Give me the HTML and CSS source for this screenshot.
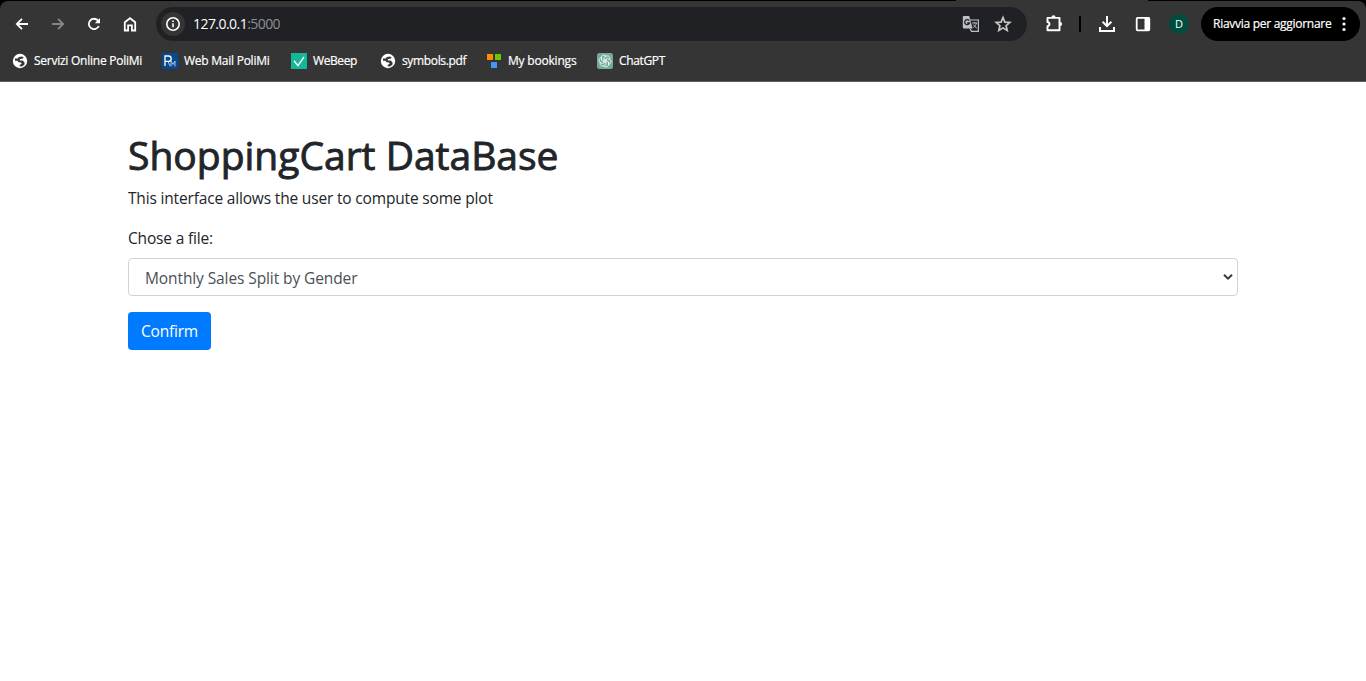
FILE: index.html
```html
<!DOCTYPE html>
<html lang="en">
<head>
<meta charset="utf-8">
<title>ShoppingCart DataBase</title>
<link rel="stylesheet" href="styles.css">
</head>
<body>
<svg class="defs" width="0" height="0"><defs>
<symbol id="globe" viewBox="0 0 16 16"><circle cx="8" cy="8" r="7.200" fill="#fff"/><path d="M3 5.600h2.600L7 4l3-.6 1.800 1.400-1.600 1-2.200.3-.4 1.300 3 .2 2 1.900-.2 2.300-2.600 1.700-2.200-.2.300-1.500 1.700-.8-.5-1.500-2.300-.3-1.600-1.400H3z" fill="#353535"/></symbol>
</defs></svg>
<header class="browser">
  <div class="tabstrip"><i></i></div>
  <div class="chrome">
  <div class="toolbar">
    <nav class="nav">
      <svg width="16" height="16" viewBox="0 0 16 16"><path d="M14 8H3M8 2.800L2.800 8 8 13.200" class="line"/></svg>
      <svg class="dim" width="16" height="16" viewBox="0 0 16 16"><path d="M2 8h11M8 2.800L13.200 8 8 13.200" class="line"/></svg>
      <svg width="16" height="16" viewBox="0 0 16 16"><path d="M12.800 10A5.200 5.200 0 1 1 12 4.600L13 6" class="line"/><path d="M14 2v5.200H8.800z" fill="#fff"/></svg>
      <svg width="16" height="16" viewBox="0 0 16 16"><path d="M2.800 6.200L8 2.200l5.200 4v8.300H9.900V9.400H6.100v5.100H2.800z" class="line"/></svg>
    </nav>
    <div class="address">
      <span class="info"><svg width="16" height="16" viewBox="0 0 16 16"><circle cx="8" cy="8" r="6.200" class="thin"/><path d="M8 7.200v4M8 4.500v1.500" class="thin"/></svg></span>
      <span class="url">127.0.0.1<span class="port">:5000</span></span>
      <svg class="translate" width="18" height="18" viewBox="0 0 18 18"><path d="M8 5h8.400v11.400H9.500L8 13.500" fill="none" stroke="#bdc1c6" stroke-width="1.200"/><path d="M1.800 1h5.400l3.400 12.500H1.800a1 1 0 0 1-1-1V2a1 1 0 0 1 1-1z" fill="#bdc1c6"/><path d="M7.200 5.600A2.500 2.500 0 1 0 7.500 8H5.200" fill="none" stroke="#202124" stroke-width="1.300"/><path d="M10.200 8h5M12.600 7v1M14.400 8c-.5 2-1.500 3.400-3.100 4.600M11.300 9.500c1 1.600 2 2.700 3.500 3.600" fill="none" stroke="#bdc1c6"/></svg>
      <svg class="star" width="18" height="18" viewBox="0 0 18 18"><path d="M9 2.500l1.900 4.600 4.900.4-3.700 3.200 1.100 4.800L9 12.900l-4.200 2.600 1.100-4.800-3.700-3.200 4.900-.4z" fill="none" stroke="#c7c7c7" stroke-width="1.700"/></svg>
    </div>
    <div class="actions">
      <svg width="20" height="20" viewBox="0 0 20 20"><path d="M3.500 3.900H15.500V16.300H3.500v-4.100c2.600-.4 2.600-3.800 0-4.200z" fill="none" stroke="#fff" stroke-width="1.900" stroke-linejoin="round"/><path d="M7.400 3.400a2.100 2.100 0 0 1 4.200 0zM16 8a2.100 2.100 0 0 1 0 4.200z" fill="#fff"/></svg>
      <i class="divider"></i>
      <svg class="download" width="18" height="18" viewBox="0 0 18 18"><path d="M9 1v10M4.600 6.800L9 11.200l4.400-4.400M2 12v4h14v-4" fill="none" stroke="#fff" stroke-width="2"/></svg>
      <svg class="panel" width="16" height="16" viewBox="0 0 16 16"><rect x="1.700" y="1.900" width="12.600" height="12.400" rx="1" fill="none" stroke="#fff" stroke-width="1.800"/><path d="M9.500 1.500h5v13h-5z" fill="#fff"/></svg>
      <span class="avatar">D</span>
      <div class="update"><span>Riavvia per aggiornare</span><svg width="4" height="16" viewBox="0 0 4 16"><g fill="#fff"><circle cx="2" cy="2.500" r="1.600"/><circle cx="2" cy="8" r="1.600"/><circle cx="2" cy="13.500" r="1.600"/></g></svg></div>
    </div>
  </div>
  <div class="bookmarks">
    <a class="bm b1"><svg width="16" height="16"><use href="#globe"/></svg><span>Servizi Online PoliMi</span></a>
    <a class="bm b2"><svg width="16" height="16" viewBox="0 0 16 16"><path d="M0 0h16v16H0z" fill="#084891"/><path d="M3 13V3h3.500a2.700 2.700 0 0 1 0 5.400H3" fill="none" stroke="#fff" stroke-width="1.300"/><path d="M6 8.500L8 13M9 13.500V8l2 3.500L13 8v5.500" fill="none" stroke="#a9c3e0" stroke-width="1"/></svg><span>Web Mail PoliMi</span></a>
    <a class="bm b3"><svg width="16" height="16" viewBox="0 0 16 16"><path d="M0 0h16v16H0z" fill="#13b898"/><path d="M3 7.700l4 5L13 4" fill="none" stroke="#fff" stroke-width="1.400"/></svg><span>WeBeep</span></a>
    <a class="bm b4"><svg width="16" height="16"><use href="#globe"/></svg><span>symbols.pdf</span></a>
    <a class="bm b5"><svg width="16" height="16" viewBox="0 0 16 16"><path d="M1 1h6v6H1z" fill="#ff8c00"/><path d="M9 1h6v6H9z" fill="#6ec800"/><path d="M5 9h6v6H5z" fill="#4596f0"/></svg><span>My bookings</span></a>
    <a class="bm b6"><svg width="16" height="16" viewBox="0 0 16 16"><rect width="16" height="16" rx="2.500" fill="#74aa9c"/><g fill="none" stroke="#fff" stroke-width=".8"><path id="petal" d="M7 8.700V4.600l2.300-1.500c2.400-1 4.500 1.500 3.300 3.700"/><use href="#petal" transform="rotate(60 8 8)"/><use href="#petal" transform="rotate(120 8 8)"/><use href="#petal" transform="rotate(180 8 8)"/><use href="#petal" transform="rotate(240 8 8)"/><use href="#petal" transform="rotate(300 8 8)"/></g></svg><span>ChatGPT</span></a>
  </div>
  </div>
</header>
<main class="container">
  <h1>ShoppingCart DataBase</h1>
  <p>This interface allows the user to compute some plot</p>
  <form>
    <label>Chose a file:</label>
    <div class="select"><span>Monthly Sales Split by Gender</span><svg width="10" height="8" viewBox="0 0 10 8"><path d="M1 1.700l4 4 4-4" fill="none" stroke="#343a40" stroke-width="2"/></svg></div>
    <button type="button">Confirm</button>
  </form>
</main>
</body>
</html>
```
FILE: styles.css
```css
* { box-sizing: border-box; }
body { margin: 0; height: 681px; overflow: hidden; background: #fff; color: #212529; font-family: "Open Sans", "Noto Sans", sans-serif; }
svg { display: block; flex: none; }
.defs { position: absolute; }
.browser { height: 82px; background: #000; color: #fff; font-size: 12px; }
.tabstrip { height: 1px; padding-left: 956px; }
.tabstrip i { display: block; width: 192px; height: 1px; background: #353535; }
.chrome { height: 81px; background: #353535; border-radius: 8px 8px 0 0; border-bottom: 1px solid #5c5c5c; }
.toolbar { height: 46px; display: flex; align-items: center; padding-left: 14px; }
.nav { display: flex; gap: 20px; width: 142px; }
.line { fill: none; stroke: #fff; stroke-width: 1.8; }
.dim { opacity: .4; }
.thin { fill: none; stroke: #fff; stroke-width: 1.6; }
.address { width: 871px; height: 34px; border-radius: 17px; background: #202124; display: flex; align-items: center; padding-left: 5px; }
.info { width: 24px; height: 24px; border-radius: 50%; background: #353535; display: grid; place-items: center; }
.url { margin-left: 8px; width: 769px; font-size: 14px; line-height: 18px; padding-bottom: 1px; letter-spacing: -.55px; white-space: nowrap; }
.port { color: #8c8f93; }
.star { margin-left: 14px; }
.actions { display: flex; align-items: center; flex: 1; padding-left: 17px; }
.divider { width: 2px; height: 16px; background: #000; margin-left: 15px; }
.download { margin-left: 17px; }
.panel { margin-left: 19px; }
.avatar { width: 20px; height: 20px; border-radius: 50%; background: #004d40; display: grid; place-items: center; margin-left: 18px; font-size: 11px; line-height: 18px; padding-bottom: 1px; }
.update { margin-left: 12px; width: 159px; height: 34px; border-radius: 17px; background: #000; display: flex; align-items: center; justify-content: space-between; padding: 0 14px 0 12px; }
.update span { width: 124px; white-space: nowrap; letter-spacing: -.28px; padding-bottom: 1px; -webkit-text-stroke: .2px; }
.bookmarks { display: flex; height: 28px; align-items: center; padding-left: 12px; }
.bm { display: flex; align-items: center; gap: 6px; white-space: nowrap; letter-spacing: -.25px; -webkit-text-stroke: .2px; }
.bm span { padding-bottom: 2px; }
.b1 { width: 150px; }
.b2 { width: 129px; }
.b3 { width: 89px; letter-spacing: -.4px; }
.b4 { width: 106px; letter-spacing: -.35px; }
.b5 { width: 111px; letter-spacing: -.2px; }
.b6 { letter-spacing: -.35px; }
.container { padding: 49px 128px 0; font-size: 15.500px; letter-spacing: -.17px; }
h1 { margin: 0 0 7px; font-size: 39px; line-height: 48px; font-weight: 400; letter-spacing: 0; -webkit-text-stroke: .9px #212529; }
p { margin: 0 0 16px; line-height: 24px; }
label { display: block; line-height: 24px; margin-bottom: 8px; }
.select { height: 38px; border: 1px solid #ced4da; border-radius: 4px; display: flex; align-items: center; justify-content: space-between; padding: 0 4px 0 16px; color: #495057; margin-bottom: 16px; letter-spacing: -.1px; }
.select span { padding-top: 2px; }
button { display: block; width: 83px; height: 38px; padding: 0; border: 0; border-radius: 4px; background: #007bff; color: #fff; font: 15.500px "Open Sans", "Noto Sans", sans-serif; letter-spacing: -.2px; }
```
